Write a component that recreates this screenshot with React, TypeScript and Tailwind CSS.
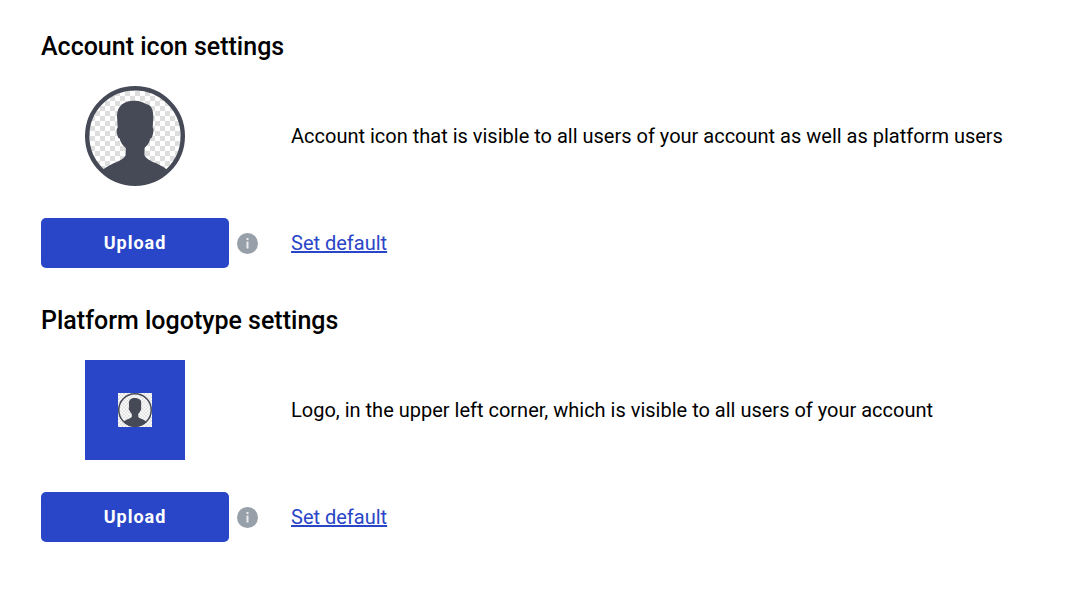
import { useId } from "react";

function Avatar({ className, square = false }: { className: string; square?: boolean }) {
  const id = useId();
  const checker = `${id}-checker`;
  const clip = `${id}-clip`;
  return (
    <svg viewBox="0 0 100 100" className={className} aria-hidden="true">
      <defs>
        <pattern id={checker} width="10" height="10" patternUnits="userSpaceOnUse">
          <rect width="10" height="10" fill="#fff" />
          <rect x="5" width="5" height="5" fill="#dedede" />
          <rect y="5" width="5" height="5" fill="#dedede" />
        </pattern>
        <clipPath id={clip}>
          <circle cx="50" cy="50" r="49" />
        </clipPath>
      </defs>
      {square ? (
        <rect width="100" height="100" fill={`url(#${checker})`} />
      ) : (
        <circle cx="50" cy="50" r="49" fill={`url(#${checker})`} />
      )}
      <path
        clipPath={`url(#${clip})`}
        fill="#464a56"
        d="M49 14.700C54 14.500 58 16 61 18C66 19 68.500 23 68.300 32L67.700 41.500C69 43 68.500 46 67.700 49C67 51.500 66.500 52.500 65.300 52.500C64.500 57 62 59.500 59.500 62V69C61 73 65 74.500 70 76.700C75 79 80 81 84 86L78 100H22L16 86C20 81 25 79 30 76.700C35 74.500 39 73 40.700 69V62C38 59.500 35.500 57 34.700 52.500C33.500 52.500 33 51.500 32.300 49C31.500 46 31.200 43 32.700 41.500L32 30C32 19.500 39 15 49 14.700Z"
      />
      <circle cx="50" cy="50" r="47.800" fill="none" stroke="#464a56" strokeWidth="4.400" />
    </svg>
  );
}

function InfoIcon() {
  return (
    <svg viewBox="0 0 21 21" className="size-[21px] shrink-0" role="img" aria-label="Information">
      <circle cx="10.500" cy="10.500" r="10.500" fill="#979fa9" />
      <rect x="9.500" y="5" width="2" height="2" fill="#e9ebee" />
      <rect x="9.500" y="8.500" width="2" height="7" fill="#e9ebee" />
    </svg>
  );
}

function Section({ title, text, logo = false }: { title: string; text: string; logo?: boolean }) {
  return (
    <section>
      <h2 className="text-[25px] leading-8 font-medium">{title}</h2>
      <div className="mt-[23px] grid grid-cols-[218px_1fr] items-center gap-x-8 gap-y-8">
        <div className="flex w-[188px] justify-center">
          {logo ? (
            <div className="flex size-[100px] items-center justify-center bg-[#2a46c8]">
              <Avatar className="size-[34px]" square />
            </div>
          ) : (
            <Avatar className="size-[100px]" />
          )}
        </div>
        <p className="text-xl">{text}</p>
        <div className="flex items-center gap-2">
          <button
            type="button"
            className="h-[50px] w-[188px] shrink-0 rounded-[5px] bg-[#2a46c8] text-lg font-bold tracking-[1px] text-white"
          >
            Upload
          </button>
          <InfoIcon />
        </div>
        <a href="#default" className="justify-self-start text-xl text-[#2a46c8] underline">
          Set default
        </a>
      </div>
    </section>
  );
}

export default function App() {
  return (
    <main className="flex min-h-screen flex-col gap-[37px] bg-white px-[41px] py-[31px] font-['Roboto',sans-serif] text-black">
      <Section
        title="Account icon settings"
        text="Account icon that is visible to all users of your account as well as platform users"
      />
      <Section
        title="Platform logotype settings"
        text="Logo, in the upper left corner, which is visible to all users of your account"
        logo
      />
    </main>
  );
}
